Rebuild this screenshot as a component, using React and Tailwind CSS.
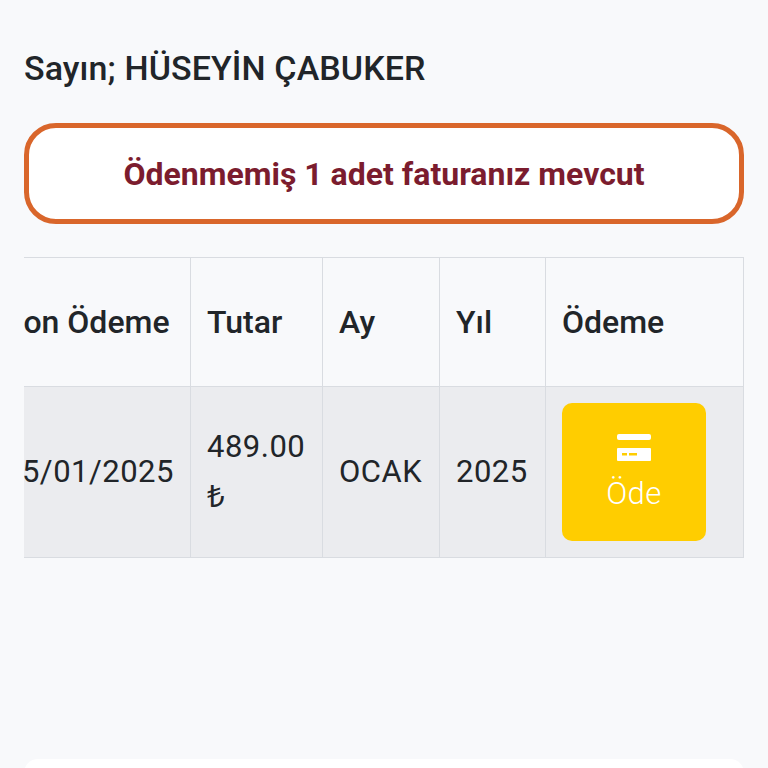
import React from 'react'

const cellBase = 'border border-[#d9dce1] pl-4 pr-[17px] align-middle text-left'

export default function App() {
  return (
    <div className="h-[768px] w-full overflow-hidden bg-[#f8f9fb] px-6 font-['Roboto',sans-serif] text-[#212529]">
      <h1 className="pt-[47px] text-[34px] leading-[43px] font-medium tracking-[0.1px]">Sayın; HÜSEYİN ÇABUKER</h1>

      <div className="mt-[33px] flex h-[101px] w-[720px] items-center justify-center rounded-[32px] border-[5px] border-[#d9662b] bg-white">
        <span className="text-[32px] font-bold text-[#7b1c2e]">Ödenmemiş 1 adet faturanız mevcut</span>
      </div>

      <div className="mt-[33px] w-[720px] overflow-hidden">
        <table className="ml-[-34px] w-[753px] table-fixed border-collapse">
          <colgroup>
            <col className="w-[200px]" />
            <col className="w-[132px]" />
            <col className="w-[117px]" />
            <col className="w-[106px]" />
            <col className="w-[198px]" />
          </colgroup>
          <thead>
            <tr className="h-[129px] text-[32px]">
              <th className="border border-[#d9dce1] pl-[13px] text-left align-middle font-medium whitespace-nowrap">Son Ödeme</th>
              <th className={`${cellBase} font-medium`}>Tutar</th>
              <th className={`${cellBase} font-medium`}>Ay</th>
              <th className={`${cellBase} font-medium`}>Yıl</th>
              <th className={`${cellBase} font-medium`}>Ödeme</th>
            </tr>
          </thead>
          <tbody>
            <tr className="h-[171px] bg-[#ebecef] text-[31px] tracking-[0.5px]">
              <td className="border border-[#d9dce1] pl-[13px] text-left align-middle whitespace-nowrap">15/01/2025</td>
              <td className={`${cellBase} leading-[48px]`}>
                489.00 <span className="font-['Noto_Sans',sans-serif]">₺</span>
              </td>
              <td className={cellBase}>OCAK</td>
              <td className={cellBase}>2025</td>
              <td className={cellBase}>
                <button className="flex h-[138px] w-[144px] flex-col items-center justify-start rounded-[10px] bg-[#ffcd00] pt-[31px] text-white">
                  <svg width="34" height="27" viewBox="0 0 34 27" fill="none">
                    <rect x="0" y="0" width="34" height="6" rx="2" fill="#fff" />
                    <rect x="0" y="14" width="34" height="13" rx="1" fill="#fff" />
                    <rect x="5" y="19" width="5" height="2.5" fill="#ffcd00" />
                    <rect x="12" y="19" width="8" height="2.5" fill="#ffcd00" />
                  </svg>
                  <span className="mt-[13px] text-[31px] leading-[40px] font-light">Öde</span>
                </button>
              </td>
            </tr>
          </tbody>
        </table>
      </div>

      <div className="mt-[201px] h-[40px] w-[720px] rounded-[14px] bg-white" />
    </div>
  )
}
